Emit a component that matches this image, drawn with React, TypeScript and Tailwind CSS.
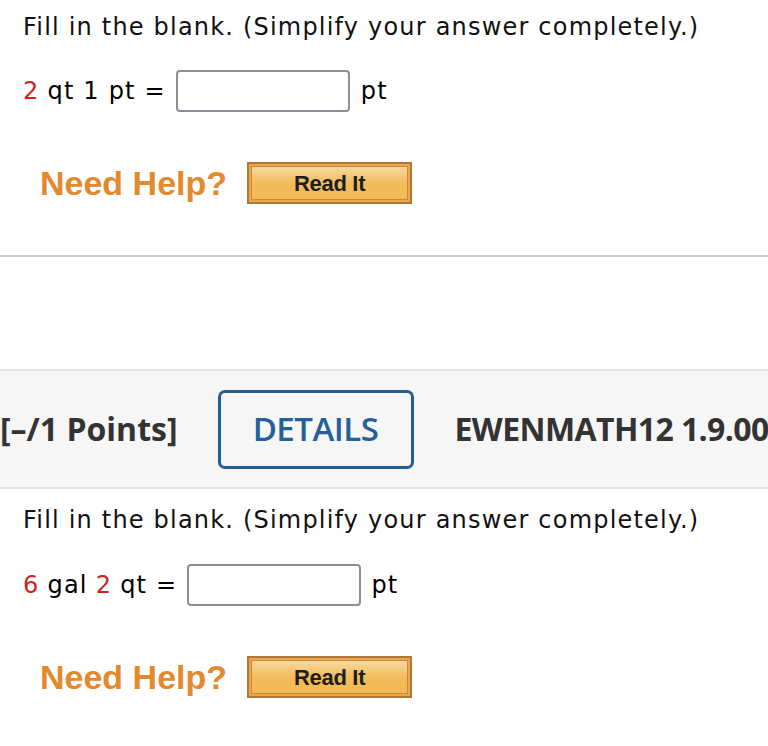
import React from "react";

const verdana = { fontFamily: '"DejaVu Sans", Verdana, sans-serif' };
const arial = { fontFamily: '"Liberation Sans", Arial, sans-serif' };
const open = { fontFamily: '"Open Sans", sans-serif' };

function ReadIt() {
  return (
    <div className="w-[165px] h-[42px] shrink-0 border-2 border-[#b47636] bg-[#eea64a] p-[2px]">
      <div className="w-full h-full border border-[#c98a3e] bg-gradient-to-b from-[#f8d9a0] via-[#f2bc5a] to-[#f2bb57] flex items-center justify-center">
        <span className="text-[22px] font-bold text-[#1e1e1e] tracking-[-0.3px]" style={arial}>
          Read It
        </span>
      </div>
    </div>
  );
}

function NeedHelp() {
  return (
    <div className="flex items-center pl-[40px]">
      <span className="text-[34px] font-bold text-[#e38a2f] leading-none" style={arial}>
        Need Help?
      </span>
      <div className="ml-[20px]">
        <ReadIt />
      </div>
    </div>
  );
}

function Input() {
  return <div className="w-[174px] h-[42px] shrink-0 border-2 border-[#8e8e98] rounded-[4px] bg-white" />;
}

export default function App() {
  return (
    <div className="w-[768px] h-[746px] bg-white overflow-hidden relative text-black" style={verdana}>
      <div className="px-[23px] pt-[13px]">
        <div className="text-[24px] leading-[28px] tracking-[1.2px] text-[#111] whitespace-nowrap">
          Fill in the blank. (Simplify your answer completely.)
        </div>
        <div className="flex items-center mt-[29px] text-[24px] tracking-[1.2px] h-[42px]">
          <span className="text-[#c8261f]">2</span>
          <span className="ml-[8px]">qt 1 pt =</span>
          <div className="ml-[10px]">
            <Input />
          </div>
          <span className="ml-[11px]">pt</span>
        </div>
      </div>
      <div className="mt-[50px]">
        <NeedHelp />
      </div>
      <div className="mt-[51px] h-[2px] bg-[#cccccc]" />
      <div className="mt-[112px] h-[120px] bg-[#f6f6f6] border-y-2 border-[#e2e2e2] flex items-center whitespace-nowrap" style={open}>
        <span className="shrink-0 text-[32px] font-bold text-[#333]">[–/1 Points]</span>
        <div className="shrink-0 ml-[40px] w-[196px] h-[79px] border-[3px] border-[#245f94] rounded-[7px] flex items-center justify-center">
          <span className="text-[33px] font-semibold text-[#24609a] tracking-[-0.5px]">DETAILS</span>
        </div>
        <span className="shrink-0 ml-[41px] text-[32px] font-bold text-[#333] tracking-[-0.6px]">EWENMATH12 1.9.00</span>
      </div>
      <div className="px-[23px] pt-[17px]">
        <div className="text-[24px] leading-[28px] tracking-[1.2px] text-[#111] whitespace-nowrap">
          Fill in the blank. (Simplify your answer completely.)
        </div>
        <div className="flex items-center mt-[30px] text-[24px] tracking-[1.2px] h-[42px]">
          <span className="text-[#c8261f]">6</span>
          <span className="ml-[8px]">gal</span>
          <span className="ml-[8px] text-[#c8261f]">2</span>
          <span className="ml-[8px]">qt =</span>
          <div className="ml-[10px]">
            <Input />
          </div>
          <span className="ml-[10px]">pt</span>
        </div>
      </div>
      <div className="mt-[50px]">
        <NeedHelp />
      </div>
    </div>
  );
}
